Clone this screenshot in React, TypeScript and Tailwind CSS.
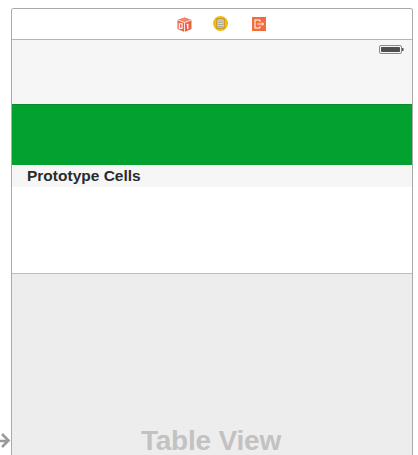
export default function App() {
  return (
    <div className="relative h-[455px] w-[418px] overflow-hidden bg-white pl-[11px] pt-2 font-['Liberation_Sans',Arial,sans-serif]">
      <div className="flex h-[447px] w-[402px] flex-col overflow-hidden rounded-tl-[3px] rounded-tr-[3px] border-x border-t border-[#a9a9a9]">
        <div className="flex h-[31px] shrink-0 items-center border-b border-[#b4b4b4] bg-white">
          <div className="flex h-full w-full items-center pl-[165px]">
            <svg width="15" height="15" viewBox="0 0 15 15">
              <path d="M7.500 0.500 14.500 3v9l-7 3-7-3V3z" fill="#ee6145" />
              <path d="M7.500 0.500 14.500 3 7.500 5.500 0.500 3z" fill="#f4866b" />
              <path d="M0.500 3 7.500 5.500 14.500 3M7.500 5.500V15" stroke="#fff" strokeWidth="0.8" fill="none" />
              <rect x="2.300" y="6.800" width="2.800" height="4.600" fill="none" stroke="#fff" strokeWidth="1.100" />
              <path d="M10.800 7v5M9.600 7.800l1.200-.8" stroke="#fff" strokeWidth="1.300" fill="none" />
            </svg>
            <svg className="ml-[21px] -translate-y-px" width="15" height="15" viewBox="0 0 15 15">
              <circle cx="7.500" cy="7.500" r="7.500" fill="#f5b90f" />
              <rect x="4" y="3" width="7" height="9" fill="#f1efe2" stroke="#77705a" strokeWidth="0.7" />
              <path d="M5 5h5M5 6.800h5M5 8.600h5M5 10.400h5" stroke="#8a8779" strokeWidth="0.8" />
            </svg>
            <svg className="ml-[24px]" width="14" height="14" viewBox="0 0 14 14">
              <rect width="14" height="14" fill="#f56c3c" />
              <path d="M8 3H3v8h5M8 3v1.800M8 11V9.200" stroke="#fff" strokeWidth="1.100" fill="none" />
              <path d="M5.500 7h6M10 5.400 11.600 7 10 8.600" stroke="#fff" strokeWidth="1" fill="none" />
            </svg>
          </div>
        </div>
        <div className="flex h-[64px] shrink-0 justify-end bg-[#f6f6f6] pr-[8px] pt-[5px]">
          <svg width="25" height="9" viewBox="0 0 25 9">
            <rect x="0.500" y="0.500" width="22" height="8" rx="1.500" fill="#f6f6f6" stroke="#8a8a8a" />
            <rect x="2" y="2" width="19" height="5" rx="0.800" fill="#4f4f4f" />
            <rect x="23" y="3" width="1.500" height="3" fill="#555" />
          </svg>
        </div>
        <div className="h-[61px] shrink-0 border-t border-[#0a8a2c] bg-[#03a12f]" />
        <div className="flex h-[22px] shrink-0 items-center bg-[#f6f6f6] pl-[15px] text-[15.5px] font-bold leading-[22px] text-[#2b2b2b]">
          Prototype Cells
        </div>
        <div className="h-[86px] shrink-0 bg-white" />
        <div className="flex min-h-0 flex-1 items-end justify-center border-t border-[#bdbdbd] bg-[#ededed] pr-[2px]">
          <span className="text-[28px] font-bold leading-[29px] tracking-[-0.2px] text-[#c2c2c2]">Table View</span>
        </div>
      </div>
      <svg className="absolute left-0 top-[431px]" width="11" height="20" viewBox="0 0 11 20">
        <path d="M0 10H8M2 3 8.500 9.500 2 16" fill="none" stroke="#9a9a9a" strokeWidth="2.600" />
      </svg>
    </div>
  );
}
